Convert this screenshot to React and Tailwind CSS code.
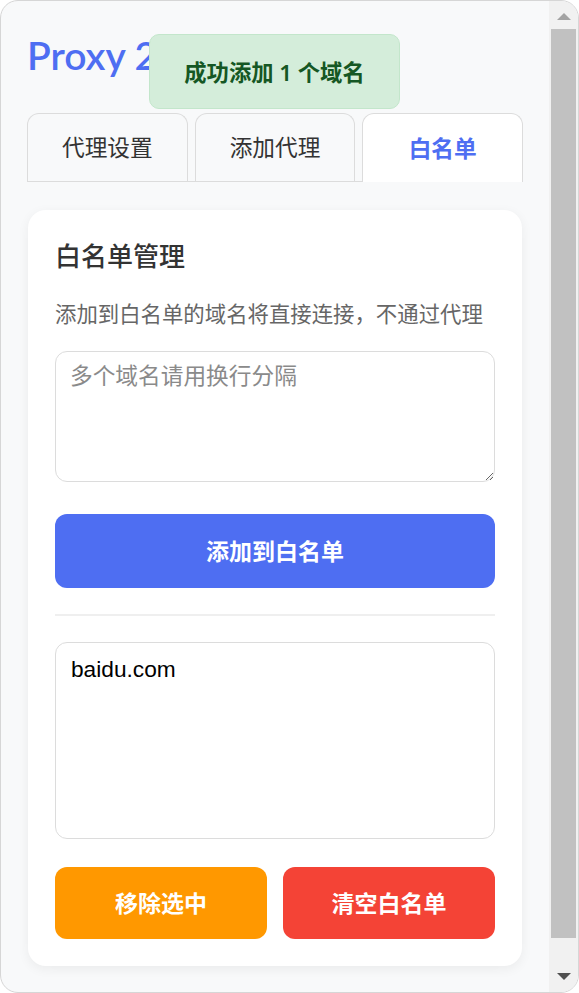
export default function App() {
  const font = { fontFamily: '"Noto Sans", "Noto Sans CJK SC", sans-serif' };
  return (
    <div className="relative w-[579px] h-[993px] flex overflow-hidden rounded-[18px] border border-[#d6d6d6] bg-[#f8f9fa]" style={font}>
      <div className="flex-1 pt-[30px] px-[26px]">
        <h1 className="text-[39px] leading-[48px] font-semibold text-[#4e6ef2] mb-[34px] [font-family:Lato,'Noto_Sans_CJK_SC',sans-serif]">
          Proxy 2.0
        </h1>

        <div className="flex items-start gap-[7px] border-b border-[#dcdcdc]">
          {['代理设置', '添加代理', '白名单'].map((t, i) =>
            i === 2 ? (
              <div key={t} className="flex-1 h-[69px] -mb-px flex items-center justify-center pt-[2px] rounded-t-[12px] border border-b-0 border-[#dcdcdc] bg-white text-[22.7px] font-bold text-[#4e6ef2]">
                {t}
              </div>
            ) : (
              <div key={t} className="flex-1 h-[68px] flex items-center justify-center pt-[2px] rounded-t-[12px] border border-b-0 border-[#dcdcdc] bg-[#f8f9fa] text-[22.7px] text-[#333]">
                {t}
              </div>
            )
          )}
        </div>

        <div className="mt-[28px] mx-px bg-white rounded-[18px] shadow-[0_3px_12px_rgba(0,0,0,0.06)] pt-[28px] pb-[27px] px-[27px]">
          <h2 className="text-[26px] leading-[36px] font-medium text-[#333]">白名单管理</h2>
          <p className="mt-[24px] text-[21.4px] leading-[32px] text-[#666] whitespace-nowrap">
            添加到白名单的域名将直接连接，不通过代理
          </p>
          <textarea
            className="block mt-[21px] w-full h-[131px] rounded-[12px] border border-[#dcdcdc] bg-white px-[14px] pt-[13px] text-[22.7px] leading-[22px] text-[#333] placeholder:text-[#8a8a8a] outline-none"
            placeholder="多个域名请用换行分隔"
          />
          <button className="mt-[32px] w-full h-[74px] rounded-[12px] bg-[#4e6ef2] text-white text-[23px] font-bold">
            添加到白名单
          </button>
          <div className="mt-[26px] h-[2px] bg-[#efefef]" />
          <div className="mt-[26px] h-[197px] rounded-[12px] border border-[#dcdcdc] pt-[13px] px-[15px]">
            <div className="text-[22.7px] leading-[26px] text-black [font-family:'Liberation_Sans',Arial,sans-serif]">baidu.com</div>
          </div>
          <div className="mt-[28px] flex gap-[16px]">
            <button className="flex-1 h-[72px] rounded-[12px] bg-[#ff9800] text-white text-[23px] font-bold">移除选中</button>
            <button className="flex-1 h-[72px] rounded-[12px] bg-[#f44336] text-white text-[23px] font-bold">清空白名单</button>
          </div>
        </div>
      </div>

      <div className="w-[29px] flex flex-col bg-[#f1f1f1]">
        <div className="h-[28px] flex items-center justify-center pt-[2px]">
          <svg width="14" height="7" viewBox="0 0 14 7"><path d="M7 0 L14 7 L0 7 Z" fill="#a3a3a3" /></svg>
        </div>
        <div className="h-[909px] mx-[2px] bg-[#c1c1c1]" />
        <div className="flex-1" />
        <div className="h-[30px] flex items-center justify-center pb-[2px]">
          <svg width="14" height="7" viewBox="0 0 14 7"><path d="M0 0 L14 0 L7 7 Z" fill="#505050" /></svg>
        </div>
      </div>

      <div className="absolute left-[148px] top-[33px] w-[251px] h-[75px] flex items-center justify-center pt-[3px] rounded-[10px] border border-[#c3e6cb] bg-[#d4edda] text-[22.3px] font-semibold text-[#155724]">
        成功添加 1 个域名
      </div>
    </div>
  );
}
